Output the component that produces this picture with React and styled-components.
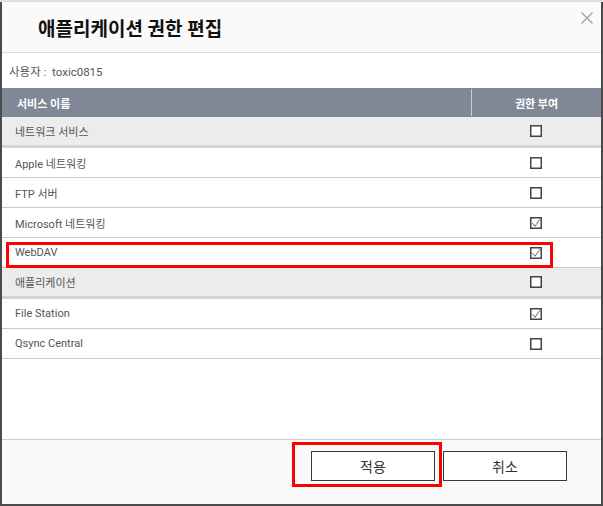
import styled, { createGlobalStyle } from 'styled-components'

const GlobalStyle = createGlobalStyle`
  html, body {
    margin: 0;
    padding: 0;
  }
  body {
    background: #dedede;
    font-family: Roboto, "Noto Sans CJK KR", sans-serif;
  }
  * {
    box-sizing: border-box;
  }
`

const services = [
  { name: '네트워크 서비스', group: true, checked: false },
  { name: 'Apple 네트워킹', checked: false },
  { name: 'FTP 서버', checked: false },
  { name: 'Microsoft 네트워킹', checked: true },
  { name: 'WebDAV', checked: true, marked: true },
  { name: '애플리케이션', group: true, checked: false },
  { name: 'File Station', checked: true },
  { name: 'Qsync Central', checked: false },
]

const CheckBox = ({ checked }) => (
  <Box>
    <svg width="12" height="12" viewBox="0 0 12 12">
      <rect x="0.75" y="0.75" width="10.5" height="10.5" fill="#fff" stroke="#444" strokeWidth="1.5" />
      {checked && (
        <path d="M2.3 6.2 L5 9.3 L10 2.2" fill="none" stroke="#666" strokeWidth="1" />
      )}
    </svg>
  </Box>
)

const App = () => {
  return (
    <>
      <GlobalStyle />
      <Dialog>
        <TitleBar>
          <Title>애플리케이션 권한 편집</Title>
          <Close aria-label="닫기">
            <svg width="12" height="12" viewBox="0 0 12 12">
              <path d="M0.5 0.5 L11.5 11.5 M11.5 0.5 L0.5 11.5" stroke="#9a9a9a" strokeWidth="1.1" />
            </svg>
          </Close>
        </TitleBar>
        <UserRow>사용자 :&nbsp;&nbsp;toxic0815</UserRow>
        <Table>
          <HeaderRow>
            <HeadCell>서비스 이름</HeadCell>
            <HeadCell $center $divider>권한 부여</HeadCell>
          </HeaderRow>
          {services.map((s) => (
            <Row key={s.name} $group={s.group}>
              <NameCell>{s.name}</NameCell>
              <PermCell>
                <CheckBox checked={s.checked} />
              </PermCell>
              {s.marked && <RowMark />}
            </Row>
          ))}
        </Table>
        <Footer>
          <Marked>
            <Button>적용</Button>
            <ButtonMark />
          </Marked>
          <Button>취소</Button>
        </Footer>
      </Dialog>
    </>
  )
}

export default App

const Dialog = styled.div`
  margin-top: 2px;
  width: 603px;
  height: 504px;
  background: #fff;
  border: 2px solid #4b4b4b;
  border-top: none;
  display: flex;
  flex-direction: column;
`

const TitleBar = styled.div`
  position: relative;
  height: 51px;
  flex-shrink: 0;
  display: flex;
  align-items: center;
  padding: 1px 0 0 36px;
  background: #fafafa;
  border-bottom: 1px solid #dadada;
`

const Title = styled.h1`
  margin: 0;
  font-size: 19px;
  font-weight: bold;
  color: #111;
`

const Close = styled.span`
  position: absolute;
  top: 10px;
  right: 8px;
  display: flex;
`

const UserRow = styled.div`
  height: 35px;
  flex-shrink: 0;
  display: flex;
  align-items: center;
  padding-left: 7px;
  font-size: 11.5px;
  color: #555;
`

const Table = styled.div`
  flex: 1;
  display: flex;
  flex-direction: column;
`

const HeaderRow = styled.div`
  display: grid;
  grid-template-columns: 469px 1fr;
  height: 29px;
  background: #808797;
`

const HeadCell = styled.div`
  display: flex;
  align-items: center;
  justify-content: ${(p) => (p.$center ? 'center' : 'flex-start')};
  padding-left: ${(p) => (p.$center ? '0' : '15px')};
  margin: ${(p) => (p.$divider ? '1px 0' : '0')};
  border-left: ${(p) => (p.$divider ? '1px solid #c9ccd3' : 'none')};
  color: #fff;
  font-size: 11px;
  font-weight: bold;
`

const Row = styled.div`
  position: relative;
  display: grid;
  grid-template-columns: 469px 1fr;
  height: ${(p) => (p.$group ? '31px' : '30px')};
  background: ${(p) => (p.$group ? '#ececec' : '#fff')};
  border-bottom: ${(p) => (p.$group ? '3px solid #d3d3d3' : '1px solid #c9c9c9')};
`

const NameCell = styled.div`
  display: flex;
  align-items: center;
  padding-left: 13px;
  font-size: 11px;
  color: #555;
`

const PermCell = styled.div`
  display: flex;
  align-items: center;
  justify-content: center;
`

const Box = styled.span`
  display: flex;
  width: 12px;
  height: 12px;
`

const RowMark = styled.div`
  position: absolute;
  left: 4px;
  top: 4px;
  width: 547px;
  height: 26px;
  border: 3px solid #f00;
  z-index: 1;
  pointer-events: none;
`

const Footer = styled.div`
  height: 65px;
  flex-shrink: 0;
  display: flex;
  justify-content: flex-end;
  align-items: flex-start;
  gap: 8px;
  padding: 11px 34px 0 0;
  background: #f9f9f9;
  border-top: 1px solid #cdcdcd;
`

const Marked = styled.span`
  position: relative;
  display: flex;
`

const Button = styled.button`
  width: 124px;
  height: 30px;
  padding: 0;
  background: #fff;
  border: 1px solid #3a3a3a;
  font-family: Roboto, "Noto Sans CJK KR", sans-serif;
  font-size: 14px;
  color: #333;
`

const ButtonMark = styled.div`
  position: absolute;
  left: -19px;
  top: -9px;
  width: 150px;
  height: 45px;
  border: 3px solid #f00;
  pointer-events: none;
`
